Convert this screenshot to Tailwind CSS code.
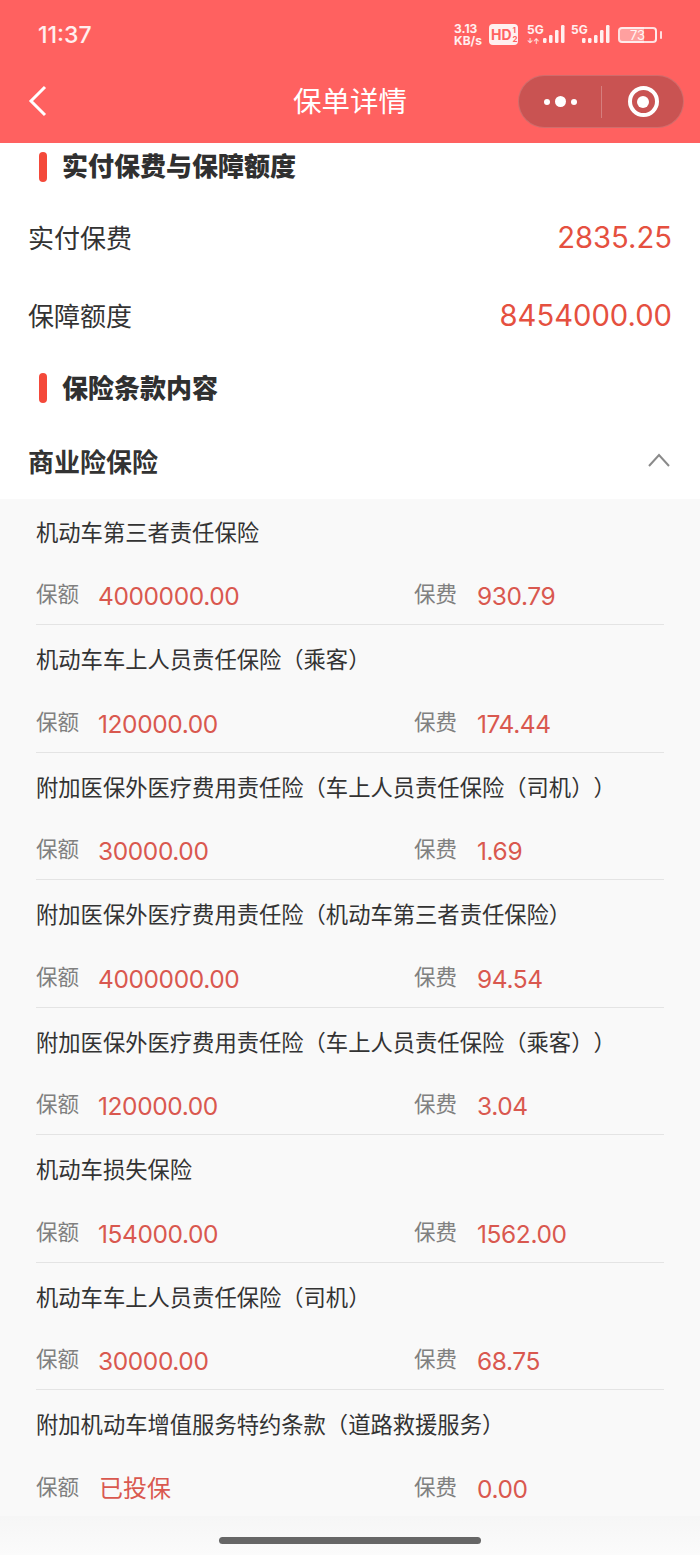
<!DOCTYPE html>
<html lang="zh-CN">
  <head>
    <meta charset="UTF-8" />
    <script src="https://cdn.jsdelivr.net/npm/@tailwindcss/browser@4"></script>
    <title>保单详情</title>
  </head>
  <body class="w-[700px] h-[1555px] overflow-hidden bg-white font-['Inter','Noto_Sans_CJK_SC',sans-serif] [text-spacing-trim:space-all]">
    <!-- Header -->
    <header class="h-[143px] bg-[#ff6160] text-white">
      <div class="relative h-[70px] pl-[38px] flex items-center">
        <span class="text-[23px] font-medium text-white/90">11:37</span>
        <div class="absolute left-[454px] top-[24px] h-[21px] flex text-white/90">
          <div class="w-[30px] -mt-[1px] flex flex-col text-[12px] font-bold leading-[12px] items-start">
            <span>3.13</span><span>KB/s</span>
          </div>
          <div class="w-[29px] h-[21px] ml-[5px] rounded-[4px] bg-white/90 text-[#ff6160] flex items-center pl-[2px] font-bold">
            <span class="text-[14px] leading-none">HD</span>
            <span class="flex flex-col text-[8px] leading-[9px] ml-[1px]"><span>1</span><span>2</span></span>
          </div>
          <div class="relative ml-[9px] w-[40px] h-[21px]">
            <span class="absolute left-0 top-0 text-[12px] font-bold leading-[11px]">5G</span>
            <span class="absolute left-0 top-[14px] text-[7px] font-bold leading-[7px]">↓↑</span>
            <svg class="absolute left-[14px] top-0" width="26" height="20" viewBox="0 0 26 20" fill="currentColor">
              <rect x="2" y="14" width="3.5" height="5" rx="1.2" /><rect x="8" y="11" width="3.5" height="8" rx="1.2" /><rect x="14" y="6" width="3.5" height="13" rx="1.2" /><rect x="20" y="1" width="3.5" height="18" rx="1.2" />
            </svg>
          </div>
          <div class="relative ml-[4px] w-[40px] h-[21px]">
            <span class="absolute left-0 top-0 text-[12px] font-bold leading-[11px]">5G</span>
            <svg class="absolute left-[9px] top-0" width="31" height="20" viewBox="0 0 31 20" fill="currentColor">
              <rect x="2" y="14" width="3.5" height="5" rx="1.2" /><rect x="8" y="14" width="3.5" height="5" rx="1.2" /><rect x="14" y="11" width="3.5" height="8" rx="1.2" /><rect x="20" y="6" width="3.5" height="13" rx="1.2" /><rect x="26" y="1" width="3.5" height="18" rx="1.2" />
            </svg>
          </div>
          <div class="ml-[7px] mt-[3px] w-[39px] h-[16px] rounded-[4px] border-2 border-white/80 bg-[linear-gradient(90deg,#ffffff66_70%,transparent_70%)] text-[13px] leading-[12px] text-center">73</div>
          <div class="ml-[3px] mt-[7px] w-[2px] h-[8px] bg-white/80 rounded-full"></div>
        </div>
      </div>
      <div class="relative h-[73px] flex items-center justify-center">
        <svg class="absolute left-[28px] top-[15px]" width="20" height="32" viewBox="0 0 20 32" fill="none" stroke="white" stroke-width="3">
          <path d="M17 2 L3 16 L17 30" />
        </svg>
        <h1 class="text-[28.5px] font-normal -mt-[8px]">保单详情</h1>
        <div class="absolute left-[518px] top-[5px] w-[166px] h-[53px] rounded-full bg-[#c95352] border border-white/15 flex items-center">
          <div class="w-[82px] flex items-center justify-center gap-[5px]">
            <span class="w-[6px] h-[6px] rounded-full bg-white"></span>
            <span class="w-[11px] h-[11px] rounded-full bg-white"></span>
            <span class="w-[6px] h-[6px] rounded-full bg-white"></span>
          </div>
          <div class="w-px h-[32px] bg-white/25"></div>
          <div class="flex-1 flex justify-center pl-[1px]">
            <div class="w-[31px] h-[31px] rounded-full border-[4px] border-white flex items-center justify-center">
              <span class="w-[12px] h-[12px] rounded-full bg-white"></span>
            </div>
          </div>
        </div>
      </div>
    </header>

    <main>
      <h2 class="h-[48px] pl-[39px] flex items-center gap-[15px] text-[26px] font-black text-[#303030]">
        <span class="w-[8px] h-[30px] rounded-full bg-[#f4493a]"></span><span class="-mt-[2px]">实付保费与保障额度</span>
      </h2>
      <div class="h-[78px] mt-[8px] px-[28px] flex items-center justify-between">
        <span class="text-[26px] text-[#333]">实付保费</span>
        <span class="text-[29.2px] text-[#e5503f]">2835.25</span>
      </div>
      <div class="h-[78px] px-[28px] flex items-center justify-between">
        <span class="text-[26px] text-[#333]">保障额度</span>
        <span class="text-[29.2px] text-[#e5503f]">8454000.00</span>
      </div>
      <h2 class="h-[66px] pl-[39px] flex items-center gap-[15px] text-[26px] font-black text-[#303030]">
        <span class="w-[8px] h-[30px] rounded-full bg-[#f4493a]"></span>保险条款内容
      </h2>
      <div class="h-[78px] pt-[4px] px-[28px] flex items-center justify-between">
        <span class="text-[26px] font-bold text-[#333]">商业险保险</span>
        <svg class="mr-[2px] -mt-[5px]" width="22" height="14" viewBox="0 0 22 14" fill="none" stroke="#8a8a8a" stroke-width="2"><path d="M1 13 L11 2 L21 13" /></svg>
      </div>

      <!-- Coverage list -->
      <section class="relative h-[1056px] bg-[#f9f9f9] px-[36px] text-[#333]">
        <div class="h-[126px] border-b border-[#e4e4e4]">
          <p class="h-[68px] flex items-center text-[22.3px]">机动车第三者责任保险</p>
          <div class="flex items-center h-[56px]">
            <span class="w-[62px] pb-[2px] text-[21.5px] text-[#808080]">保额</span><span class="w-[316px] pt-[2px] text-[24.5px] tracking-[-0.4px] text-[#d9584f]">4000000.00</span>
            <span class="w-[63px] pb-[2px] text-[21.5px] text-[#808080]">保费</span><span class="pt-[2px] text-[24.5px] tracking-[-0.4px] text-[#d9584f]">930.79</span>
          </div>
        </div>
        <div class="h-[127.5px] border-b border-[#e4e4e4]">
          <p class="h-[70px] flex items-center text-[22.3px]">机动车车上人员责任保险（乘客）</p>
          <div class="flex items-center h-[56px]">
            <span class="w-[62px] pb-[2px] text-[21.5px] text-[#808080]">保额</span><span class="w-[316px] pt-[2px] text-[24.5px] tracking-[-0.4px] text-[#d9584f]">120000.00</span>
            <span class="w-[63px] pb-[2px] text-[21.5px] text-[#808080]">保费</span><span class="pt-[2px] text-[24.5px] tracking-[-0.4px] text-[#d9584f]">174.44</span>
          </div>
        </div>
        <div class="h-[127.5px] border-b border-[#e4e4e4]">
          <p class="h-[70px] flex items-center text-[22.3px]">附加医保外医疗费用责任险（车上人员责任保险（司机））</p>
          <div class="flex items-center h-[56px]">
            <span class="w-[62px] pb-[2px] text-[21.5px] text-[#808080]">保额</span><span class="w-[316px] pt-[2px] text-[24.5px] tracking-[-0.4px] text-[#d9584f]">30000.00</span>
            <span class="w-[63px] pb-[2px] text-[21.5px] text-[#808080]">保费</span><span class="pt-[2px] text-[24.5px] tracking-[-0.4px] text-[#d9584f]">1.69</span>
          </div>
        </div>
        <div class="h-[127.5px] border-b border-[#e4e4e4]">
          <p class="h-[70px] flex items-center text-[22.3px]">附加医保外医疗费用责任险（机动车第三者责任保险）</p>
          <div class="flex items-center h-[56px]">
            <span class="w-[62px] pb-[2px] text-[21.5px] text-[#808080]">保额</span><span class="w-[316px] pt-[2px] text-[24.5px] tracking-[-0.4px] text-[#d9584f]">4000000.00</span>
            <span class="w-[63px] pb-[2px] text-[21.5px] text-[#808080]">保费</span><span class="pt-[2px] text-[24.5px] tracking-[-0.4px] text-[#d9584f]">94.54</span>
          </div>
        </div>
        <div class="h-[127.5px] border-b border-[#e4e4e4]">
          <p class="h-[70px] flex items-center text-[22.3px]">附加医保外医疗费用责任险（车上人员责任保险（乘客））</p>
          <div class="flex items-center h-[56px]">
            <span class="w-[62px] pb-[2px] text-[21.5px] text-[#808080]">保额</span><span class="w-[316px] pt-[2px] text-[24.5px] tracking-[-0.4px] text-[#d9584f]">120000.00</span>
            <span class="w-[63px] pb-[2px] text-[21.5px] text-[#808080]">保费</span><span class="pt-[2px] text-[24.5px] tracking-[-0.4px] text-[#d9584f]">3.04</span>
          </div>
        </div>
        <div class="h-[127.5px] border-b border-[#e4e4e4]">
          <p class="h-[70px] flex items-center text-[22.3px]">机动车损失保险</p>
          <div class="flex items-center h-[56px]">
            <span class="w-[62px] pb-[2px] text-[21.5px] text-[#808080]">保额</span><span class="w-[316px] pt-[2px] text-[24.5px] tracking-[-0.4px] text-[#d9584f]">154000.00</span>
            <span class="w-[63px] pb-[2px] text-[21.5px] text-[#808080]">保费</span><span class="pt-[2px] text-[24.5px] tracking-[-0.4px] text-[#d9584f]">1562.00</span>
          </div>
        </div>
        <div class="h-[127.5px] border-b border-[#e4e4e4]">
          <p class="h-[70px] flex items-center text-[22.3px]">机动车车上人员责任保险（司机）</p>
          <div class="flex items-center h-[56px]">
            <span class="w-[62px] pb-[2px] text-[21.5px] text-[#808080]">保额</span><span class="w-[316px] pt-[2px] text-[24.5px] tracking-[-0.4px] text-[#d9584f]">30000.00</span>
            <span class="w-[63px] pb-[2px] text-[21.5px] text-[#808080]">保费</span><span class="pt-[2px] text-[24.5px] tracking-[-0.4px] text-[#d9584f]">68.75</span>
          </div>
        </div>
        <div class="h-[127.5px] border-b border-[#e4e4e4]">
          <p class="h-[70px] flex items-center text-[22.3px]">附加机动车增值服务特约条款（道路救援服务）</p>
          <div class="flex items-center h-[56px]">
            <span class="w-[62px] pb-[2px] text-[21.5px] text-[#808080]">保额</span><span class="w-[316px] pl-[1px] pt-[1px] text-[24px] text-[#d9584f]">已投保</span>
            <span class="w-[63px] pb-[2px] text-[21.5px] text-[#808080]">保费</span><span class="pt-[2px] text-[24.5px] tracking-[-0.4px] text-[#d9584f]">0.00</span>
          </div>
        </div>
        <!-- Home indicator -->
        <div class="absolute left-0 right-0 bottom-0 h-[39px] bg-gradient-to-b from-[#f6f6f6] to-[#fbfbfb] flex justify-center pt-[21px]">
          <div class="w-[262px] h-[7px] rounded-full bg-[#666]"></div>
        </div>
      </section>
    </main>
  </body>
</html>
